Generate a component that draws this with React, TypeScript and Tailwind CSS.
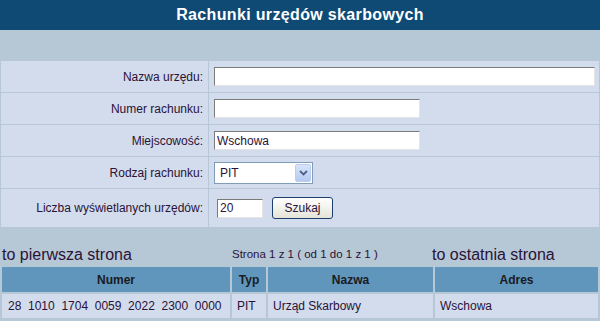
import React from "react";

const labelCls =
  "flex items-center justify-end pr-[5px] bg-[#d3dcec] text-[12px] text-[#2a1238]";
const fieldCls = "flex items-center pl-[5px] bg-[#d3dcec]";
const inputCls =
  "h-[19px] bg-white border border-t-[#7a7a7a] border-l-[#7a7a7a] border-r-[#e4e4e4] border-b-[#e4e4e4] px-[2px] text-[12px] text-[#2a1238] outline-none";

export default function App() {
  return (
    <div
      className="w-[600px] h-[321px] bg-[#b6c8d6] overflow-hidden"
      style={{ fontFamily: '"Liberation Sans", Arial, sans-serif' }}
    >
      {/* title */}
      <div className="h-[30px] bg-[#0e4a74] flex items-center justify-center">
        <h1 className="text-white font-bold text-[16px] tracking-[0.35px] leading-none">
          Rachunki urzędów skarbowych
        </h1>
      </div>
      <div className="h-[31px]" />

      {/* search form */}
      <div className="ml-[1px] mr-[1px] grid grid-cols-[207px_1fr] gap-px bg-[#b6c8d6]">
        <div className={`${labelCls} h-[31px]`}>Nazwa urzędu:</div>
        <div className={fieldCls}>
          <input className={`${inputCls} w-[381px]`} defaultValue="" />
        </div>

        <div className={`${labelCls} h-[31px]`}>Numer rachunku:</div>
        <div className={fieldCls}>
          <input className={`${inputCls} w-[206px]`} defaultValue="" />
        </div>

        <div className={`${labelCls} h-[31px]`}>Miejscowość:</div>
        <div className={fieldCls}>
          <input className={`${inputCls} w-[206px]`} defaultValue="Wschowa" />
        </div>

        <div className={`${labelCls} h-[31px]`}>Rodzaj rachunku:</div>
        <div className={fieldCls}>
          <div className="relative w-[99px] h-[22px] bg-white border border-[#7f9db9] flex items-center">
            <span className="pl-[5px] text-[12px] text-[#2a1238]">PIT</span>
            <div className="absolute right-[1px] top-[1px] w-[16px] h-[18px] rounded-[2px] bg-gradient-to-b from-[#d9e4fb] to-[#b5c9f1] border border-[#bccdf0] flex items-center justify-center">
              <svg width="9" height="6" viewBox="0 0 9 6">
                <path
                  d="M1 1 L4.5 4.5 L8 1"
                  fill="none"
                  stroke="#4d6185"
                  strokeWidth="1.8"
                />
              </svg>
            </div>
          </div>
        </div>

        <div className={`${labelCls} h-[38px]`}>Liczba wyświetlanych urzędów:</div>
        <div className="flex items-center pl-[8px] gap-[9px] bg-[#d3dcec]">
          <input className={`${inputCls} w-[46px]`} defaultValue="20" />
          <button className="w-[61px] h-[22px] rounded-[3px] border border-[#1c3f6e] bg-gradient-to-b from-white to-[#e6e4d8] text-[12px] text-[#2a1238]">
            Szukaj
          </button>
        </div>
      </div>

      {/* pager */}
      <div className="h-[40px] grid grid-cols-[230px_200px_1fr] pl-[2px] items-end pb-[3px] text-[#2a1238]">
        <span className="text-[16px] leading-[18px]">to pierwsza strona</span>
        <span className="text-[11.5px] leading-[18px] pb-[1px]">
          Strona 1 z 1 ( od 1 do 1 z 1 )
        </span>
        <span className="text-[16px] leading-[18px]">to ostatnia strona</span>
      </div>

      {/* results */}
      <div className="mx-[2px] grid grid-cols-[228px_34px_165px_1fr] gap-[2px] text-[12px]">
        <div className="h-[25px] bg-[#6096bb] flex items-center justify-center font-bold text-[#1a1a24]">
          Numer
        </div>
        <div className="h-[25px] bg-[#6096bb] flex items-center justify-center font-bold text-[#1a1a24]">
          Typ
        </div>
        <div className="h-[25px] bg-[#6096bb] flex items-center justify-center font-bold text-[#1a1a24]">
          Nazwa
        </div>
        <div className="h-[25px] bg-[#6096bb] flex items-center justify-center font-bold text-[#1a1a24]">
          Adres
        </div>

        <div className="h-[24px] bg-[#d3dcec] flex items-center pl-[6px] whitespace-pre text-[#2a1238]">
          {"28  1010  1704  0059  2022  2300  0000"}
        </div>
        <div className="h-[24px] bg-[#d3dcec] flex items-center pl-[5px] text-[#2a1238]">
          PIT
        </div>
        <div className="h-[24px] bg-[#d3dcec] flex items-center pl-[5px] text-[#2a1238]">
          Urząd Skarbowy
        </div>
        <div className="h-[24px] bg-[#d3dcec] flex items-center pl-[5px] text-[#2a1238]">
          Wschowa
        </div>
      </div>
    </div>
  );
}
